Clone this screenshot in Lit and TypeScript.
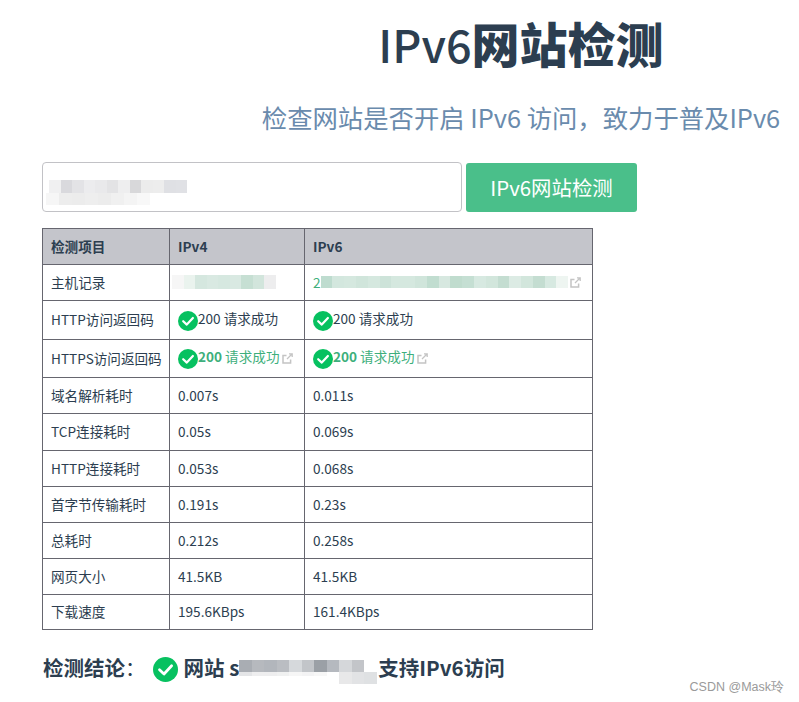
import { LitElement, html, css, svg } from "lit";
import { customElement } from "lit/decorators.js";

const check = (size: number) => html`<svg class="check" width=${size} height=${size} viewBox="0 0 20 20" aria-hidden="true">
  <circle cx="10" cy="10" r="10" fill="#07c160"></circle>
  <path d="M5.2 10.2 L8.8 13.6 L14.9 7" fill="none" stroke="#fff" stroke-width="2.2" stroke-linecap="round" stroke-linejoin="round"></path>
</svg>`;

const ext = html`<svg class="ext" width="11" height="11" viewBox="0 0 11 11" aria-hidden="true">
  ${svg`<path d="M8.6 6.5V10H1V2.4H4.5" fill="none" stroke="#c4c4c4" stroke-width="1.5"></path>
  <path d="M5 6L10 1M7 .8H10.2V4" fill="none" stroke="#c4c4c4" stroke-width="1.3"></path>`}
</svg>`;

const mosaic = (colors: string[], cell: number, height: number) => html`<span class="mosaic">${colors.map(
  (c) => html`<i style="width:${cell}px;height:${height}px;background:${c}"></i>`
)}</span>`;

const pass = (link: boolean) => html`<span class="status ${link ? "link" : ""}">${check(20)}<span class="txt"><span class=${link ? "strong" : ""}>200</span> 请求成功</span>${link ? ext : ""}</span>`;

const rows: [string, unknown, unknown, number][] = [
  ["HTTP访问返回码", pass(false), pass(false), 39],
  ["HTTPS访问返回码", pass(true), pass(true), 38],
  ["域名解析耗时", "0.007s", "0.011s", 36],
  ["TCP连接耗时", "0.05s", "0.069s", 37],
  ["HTTP连接耗时", "0.053s", "0.068s", 36],
  ["首字节传输耗时", "0.191s", "0.23s", 36],
  ["总耗时", "0.212s", "0.258s", 36],
  ["网页大小", "41.5KB", "41.5KB", 36],
  ["下载速度", "195.6KBps", "161.4KBps", 35],
];

@customElement("app-root")
export class AppRoot extends LitElement {
  static styles = css`
    :host {
      display: block;
      width: 799px;
      height: 702px;
      overflow: hidden;
      position: relative;
      background: #fff;
      font-family: "Noto Sans CJK SC", "Noto Sans", sans-serif;
      color: #2c3e50;
    }
    .page {
      width: 958px;
      margin-left: 42px;
    }
    h1 {
      margin: 0;
      padding-top: 8px;
      height: 68px;
      text-align: center;
      font-size: 48px;
      line-height: 68px;
      font-weight: 900;
      color: #2c3e50;
    }
    h1 .light { font-size: 45px; font-weight: 500; }
    .sub {
      margin: 16px 0 0;
      height: 50px;
      line-height: 50px;
      text-align: center;
      font-size: 25.35px;
      font-weight: 400;
      color: #6a8bad;
    }
    .search {
      display: flex;
      align-items: center;
      gap: 4px;
      margin-top: 20px;
    }
    .input {
      box-sizing: border-box;
      width: 420px;
      height: 50px;
      border: 1px solid #c2c2c6;
      border-radius: 4px;
      background: #fff;
      position: relative;
    }
    .input .blur1 { position: absolute; display: flex; left: 6px; top: 17px; }
    .input .blur2 { position: absolute; display: flex; left: 3px; top: 30px; }
    .btn {
      box-sizing: border-box;
      width: 171px;
      height: 49px;
      border: 0;
      border-radius: 3px;
      background: #4abf8a;
      color: #fff;
      font: 400 20.4px/49px "Noto Sans CJK SC", sans-serif;
      padding: 0;
    }
    table {
      border-collapse: collapse;
      table-layout: fixed;
      width: 551px;
      margin-top: 16px;
      font-size: 13.6px;
      color: #2c3e50;
    }
    th, td {
      border: 1px solid #66666f;
      padding: 0 8px 2px;
      text-align: left;
      vertical-align: middle;
      white-space: nowrap;
      line-height: 20px;
    }
    th { background: #c4c5cb; font-weight: 700; }
    .c1 { width: 127px; }
    .c2 { width: 135px; }
    .status {
      display: inline-flex;
      align-items: center;
      white-space: pre;
      vertical-align: middle;
      margin-top: 2px;
    }
    .status .txt { position: relative; top: -3px; }
    .status span.strong { font-weight: 700; }
    .status.link { color: #3eaf7c; }
    .status .ext { position: relative; top: -1px; }
    .check { flex: none; }
    .ext { margin-left: 3px; flex: none; }
    .hostlink { display: flex; align-items: center; color: #3eaf7c; margin-top: 1px; }
    .hostlink.v4 { margin-left: -6px; }
    .mosaic { display: inline-flex; flex: none; }
    .mosaic i { display: block; flex: none; }
    .hostlink .ext { margin-left: 2px; }
    .result {
      display: flex;
      align-items: center;
      margin-top: 22px;
      padding-left: 1px;
      height: 30px;
      font-size: 20.5px;
      font-weight: 700;
      color: #2c3e50;
      white-space: pre;
    }
    .result .check { margin: 4px 6px 0 7px; }
    .result .colon { font-weight: 400; }
    .result .blur { position: relative; width: 139px; height: 30px; flex: none; }
    .result .blur .a { position: absolute; display: flex; left: 0; top: 8px; }
    .result .blur .b { position: absolute; display: flex; left: 0; top: 20px; }
    .result .blur .c { position: absolute; display: flex; left: 100px; top: 20px; }
    .mark {
      position: absolute;
      right: 15px;
      top: 679px;
      font: 12.5px/16px "Liberation Sans", sans-serif;
      color: #9a9a9a;
    }
  `;

  render() {
    return html`
      <div class="page">
        <h1><span class="light">IPv6</span>网站检测</h1>
        <p class="sub">检查网站是否开启 IPv6 访问，致力于普及IPv6</p>
        <div class="search">
          <div class="input">
            <span class="blur1">${mosaic(["#f0f0f1","#d9d9dd","#e3e3e6","#ececee","#e9e9eb","#e3e3e5","#eeeeef","#d8d8da","#ececec","#ededed","#dfe0e4","#e0e1e5"], 11.5, 13)}</span>
            <span class="blur2">${mosaic(["#f6f6f6","#ededed","#ececec","#eeeeee","#ececec","#f0f0f0","#f4f4f4","#f8f8f8"], 13, 12)}</span>
          </div>
          <button class="btn">IPv6网站检测</button>
        </div>
        <table>
          <colgroup><col class="c1" /><col class="c2" /><col /></colgroup>
          <tr style="height:36px"><th>检测项目</th><th>IPv4</th><th>IPv6</th></tr>
          <tr style="height:36px">
            <td>主机记录</td>
            <td><span class="hostlink v4">${mosaic(["#f6f6f6","#eaf3ee","#d5e7df","#d9e9e2","#d6e8e0","#d9e9e2","#c6dfd3","#d2e5dc","#ededee"], 11.5, 14)}</span></td>
            <td><span class="hostlink">2${mosaic(["#bedccf","#d3e7de","#d5e8df","#d0e5db","#d5e8df","#cde3d9","#d5e8df","#d5e8df","#d0e5db","#c1ddd0","#d7e8e0","#c0dcce","#c5dfd3","#d7e9e1","#d2e6dc","#c4ddd1","#dcebe4","#d2e6dc","#c4ddd1","#d7e9e1","#eef5f1"], 11.8, 12)}${ext}</span></td>
          </tr>
          ${rows.map(
            ([name, a, b, h]) => html`<tr style="height:${h}px"><td>${name}</td><td>${a}</td><td>${b}</td></tr>`
          )}
        </table>
        <div class="result">检测结论<span class="colon">：</span>${check(25)}网站 s<span class="blur"><span class="a">${mosaic(["#a9adb3","#b6b9be","#b2b6bc","#babdc2","#d6d9dc","#c2c5c9","#9ba0a6","#b5b9bf","#d5d7da","#c3c5c9"], 12.5, 12)}</span><span class="b">${mosaic(["#e4e5e7","#eeeeef","#eeeeef","#f0f1f1","#f6f6f6","#f3f3f4","#f7f7f7","#ffffff"], 12.5, 4)}</span><span class="c">${mosaic(["#e8e8e9","#e2e3e5","#dfe1e3"], 12.5, 12)}</span></span>支持IPv6访问</div>
      </div>
      <div class="mark">CSDN @Mask玲</div>
    `;
  }
}
